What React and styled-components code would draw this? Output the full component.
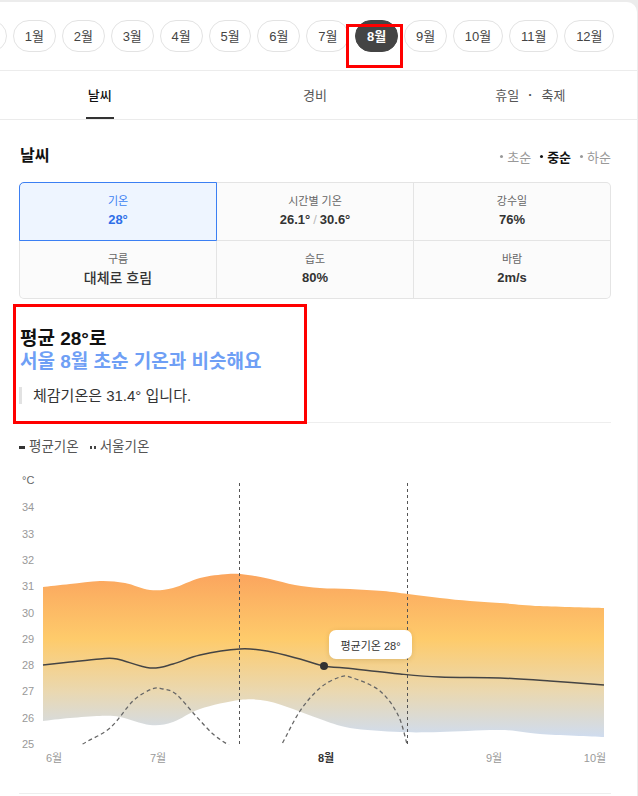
import React from 'react';
import styled, { createGlobalStyle } from 'styled-components';

const GlobalStyle = createGlobalStyle`
  html, body {
    margin: 0;
    padding: 0;
    background: #ececec;
    font-family: "Liberation Sans", "Noto Sans CJK KR", sans-serif;
    color: #333;
  }
  * { box-sizing: border-box; }
`;

const Page = styled.div`
  position: relative;
  width: 638px;
  height: 796px;
  overflow: hidden;
`;

const Card = styled.div`
  margin-top: 2px;
  width: 637px;
  height: 794px;
  background: #fff;
  border-top-right-radius: 10px;
  overflow: hidden;
`;

const MonthBar = styled.div`
  height: 69px;
  padding-top: 18px;
  border-bottom: 1px solid #ececec;
  overflow: hidden;
`;

const MonthRow = styled.div`
  display: flex;
  gap: 6px;
  margin-left: -36px;
`;

const Pill = styled.div`
  flex: none;
  height: 32px;
  ${p => p.$ghost && 'width: 43px;'}
  padding: 0 10.85px;
  display: flex;
  align-items: center;
  justify-content: center;
  border-radius: 16px;
  border: 1px solid ${p => (p.$active ? '#444' : '#e3e3e3')};
  background: ${p => (p.$active ? '#444' : '#fff')};
  color: ${p => (p.$active ? '#fff' : '#444')};
  font-size: 13px;
  font-weight: ${p => (p.$active ? 700 : 400)};
  line-height: 1;
`;

const Tabs = styled.div`
  display: grid;
  grid-template-columns: repeat(3, 1fr);
  width: 646px;
  margin-left: -8px;
  height: 49px;
  border-bottom: 1px solid #ebebeb;
`;

const Tab = styled.div`
  display: flex;
  justify-content: center;
`;

const TabLabel = styled.div`
  height: 100%;
  display: flex;
  align-items: center;
  padding: 0 2px;
  font-size: 13px;
  color: ${p => (p.$active ? '#111' : '#555')};
  font-weight: ${p => (p.$active ? 500 : 400)};
  border-bottom: 2px solid ${p => (p.$active ? '#333' : 'transparent')};
`;

const Dot = styled.span`
  margin: 0 9px;
  font-weight: 700;
`;

const Content = styled.div`
  padding: 0 26px 0 19px;
`;

const SectionHead = styled.div`
  display: flex;
  justify-content: space-between;
  align-items: center;
  margin-top: 26px;
  height: 20px;
`;

const Title = styled.h2`
  margin: 0 0 0 1px;
  font-size: 16px;
  font-weight: 700;
  color: #111;
  line-height: 20px;
`;

const Periods = styled.div`
  display: flex;
  gap: 9px;
`;

const Period = styled.span`
  display: flex;
  align-items: center;
  gap: 4px;
  font-size: 13px;
  color: ${p => (p.$active ? '#111' : '#999')};
  font-weight: ${p => (p.$active ? 700 : 400)};
  &::before {
    content: '';
    width: 3px;
    height: 3px;
    border-radius: 50%;
    background: ${p => (p.$active ? '#111' : '#999')};
  }
`;

const Table = styled.div`
  margin-top: 16px;
  display: grid;
  grid-template-columns: repeat(3, 1fr);
  grid-auto-rows: 57px;
  gap: 1px;
  padding: 1px;
  background: #e4e4e4;
  border-radius: 5px;
`;

const Cell = styled.div`
  display: flex;
  flex-direction: column;
  align-items: center;
  justify-content: center;
  gap: 3px;
  background: ${p => (p.$active ? '#eef5ff' : '#fbfbfb')};
  ${p =>
    p.$active &&
    `
    margin: -1px;
    border: 1px solid #3b7ff3;
    border-top-left-radius: 5px;
    position: relative;
    z-index: 1;
  `}
  ${p => p.$corner === 'tr' && 'border-top-right-radius: 4px;'}
  ${p => p.$corner === 'bl' && 'border-bottom-left-radius: 4px;'}
  ${p => p.$corner === 'br' && 'border-bottom-right-radius: 4px;'}
`;

const CellLabel = styled.div`
  font-size: 11px;
  line-height: 14px;
  color: ${p => (p.$active ? '#3b7ff3' : '#666')};
`;

const CellValue = styled.div`
  font-size: ${p => (p.$plain ? '14px' : '13px')};
  font-weight: ${p => (p.$plain ? 500 : 700)};
  line-height: 18px;
  color: ${p => (p.$active ? '#2f6fe8' : '#333')};
`;

const Slash = styled.span`
  color: #bbb;
  font-weight: 400;
  margin: 0 3px;
`;

const Summary = styled.div`
  margin-top: 28px;
  padding-left: 1px;
`;

const Headline = styled.div`
  font-size: 19px;
  font-weight: 700;
  line-height: 23px;
  color: ${p => (p.$accent ? '#6f9ff5' : '#111')};
`;

const Quote = styled.div`
  margin-top: 14px;
  margin-left: -1px;
  padding-left: 11px;
  border-left: 3px solid #e2e2e2;
  font-size: 15px;
  line-height: 17px;
  color: #333;
`;

const Divider = styled.hr`
  margin: ${p => p.$top}px 0 0;
  border: 0;
  border-top: 1px solid #eeeeee;
`;

const Legend = styled.div`
  display: flex;
  gap: 11px;
  margin-top: 16px;
  font-size: 13.5px;
  line-height: 16px;
  color: #555;
`;

const LegendItem = styled.span`
  display: flex;
  align-items: center;
  gap: 4px;
`;

const Swatch = styled.span`
  display: inline-block;
  width: 6px;
  height: 3px;
  background: ${p =>
    p.$dashed
      ? 'repeating-linear-gradient(90deg, #444 0 2px, transparent 2px 4px)'
      : '#333'};
`;

const ChartWrap = styled.div`
  position: relative;
  margin-top: 16px;
  width: 592px;
  height: 300px;
`;

const Tooltip = styled.div`
  position: absolute;
  left: 310px;
  top: 159px;
  width: 83px;
  height: 29px;
  display: flex;
  align-items: center;
  justify-content: center;
  background: #fff;
  border-radius: 7px;
  box-shadow: 0 1px 5px rgba(120, 90, 30, 0.2);
  font-size: 11px;
  color: #333;
`;

const Annotation = styled.div`
  position: absolute;
  left: ${p => p.$x}px;
  top: ${p => p.$y}px;
  width: ${p => p.$w}px;
  height: ${p => p.$h}px;
  border: 3px solid #ff0000;
  pointer-events: none;
`;

const smooth = pts => {
  let d = `M${pts[0][0]},${pts[0][1]}`;
  for (let i = 0; i < pts.length - 1; i++) {
    const p0 = pts[i - 1] || pts[i];
    const p1 = pts[i];
    const p2 = pts[i + 1];
    const p3 = pts[i + 2] || p2;
    const c1x = p1[0] + (p2[0] - p0[0]) / 6;
    const c1y = p1[1] + (p2[1] - p0[1]) / 6;
    const c2x = p2[0] - (p3[0] - p1[0]) / 6;
    const c2y = p2[1] - (p3[1] - p1[1]) / 6;
    d += ` C${c1x.toFixed(1)},${c1y.toFixed(1)} ${c2x.toFixed(1)},${c2y.toFixed(1)} ${p2[0]},${p2[1]}`;
  }
  return d;
};

const bandTop = [
  [43, 586], [70, 583], [100, 580], [125, 582], [150, 589], [173, 587],
  [200, 577], [228, 573], [248, 574], [270, 578], [295, 584], [320, 587],
  [350, 588], [383, 590], [408, 593], [440, 597], [470, 600], [500, 602],
  [540, 605], [604, 607],
];
const bandBottom = [
  [43, 720], [70, 717], [100, 715], [120, 716], [150, 724], [173, 721],
  [200, 708], [240, 699], [267, 700], [293, 708], [320, 718], [350, 727],
  [400, 731], [440, 731], [500, 729], [540, 733], [604, 736],
];
const meanLine = [
  [43, 664], [70, 661], [100, 658], [117, 658], [150, 667], [173, 663],
  [200, 654], [240, 648], [267, 650], [300, 658], [324, 665], [345, 667],
  [400, 673], [440, 676], [500, 677], [550, 680], [604, 684],
];
const seoulA = [
  [60, 760], [83, 743], [110, 727], [133, 700], [152, 688], [163, 688],
  [176, 693], [195, 714], [213, 733], [230, 745], [245, 755],
];
const seoulB = [
  [272, 760], [282, 743], [300, 710], [320, 687], [340, 676], [353, 677],
  [380, 690], [398, 714], [407, 743], [412, 760],
];

const bandPath = () => {
  const bottom = [...bandBottom].reverse();
  return `${smooth(bandTop)} L${bottom[0][0]},${bottom[0][1]} ${smooth(bottom).slice(1).replace(/^[^C]*/, '')} Z`;
};

const months = ['', '1월', '2월', '3월', '4월', '5월', '6월', '7월', '8월', '9월', '10월', '11월', '12월'];
const ticks = [34, 33, 32, 31, 30, 29, 28, 27, 26, 25];
const xLabels = [
  { x: 54, t: '6월' },
  { x: 158, t: '7월' },
  { x: 326, t: '8월', bold: true },
  { x: 494, t: '9월' },
  { x: 595, t: '10월' },
];

const cells = [
  { label: '기온', value: '28°', active: true },
  { label: '시간별 기온', value: ['26.1°', '30.6°'], corner: 'none' },
  { label: '강수일', value: '76%', corner: 'tr' },
  { label: '구름', value: '대체로 흐림', plain: true, corner: 'bl' },
  { label: '습도', value: '80%' },
  { label: '바람', value: '2m/s', corner: 'br' },
];

const Chart = () => (
  <ChartWrap>
    <svg width="592" height="300" viewBox="19 470 592 300">
      <defs>
        <linearGradient id="band" gradientUnits="userSpaceOnUse" x1="0" y1="573" x2="0" y2="736">
          <stop offset="0" stopColor="#fba55e" />
          <stop offset="0.4" stopColor="#fecb6b" />
          <stop offset="0.72" stopColor="#ead8b0" />
          <stop offset="1" stopColor="#cfdcef" />
        </linearGradient>
        <clipPath id="plot">
          <rect x="19" y="470" width="592" height="273.5" />
        </clipPath>
      </defs>
      <text x="22" y="483" fontSize="11" fill="#666">°C</text>
      {ticks.map(t => (
        <text key={t} x="22" y={743 - (t - 25) * 26.3 + 4} fontSize="11" fill="#999">
          {t}
        </text>
      ))}
      <path d={bandPath()} fill="url(#band)" />
      <g clipPath="url(#plot)" fill="none" stroke="#666" strokeWidth="1.3" strokeDasharray="4 3">
        <path d={smooth(seoulA)} />
        <path d={smooth(seoulB)} />
      </g>
      <g stroke="#555" strokeWidth="1" strokeDasharray="3 3">
        <line x1="239.5" y1="482" x2="239.5" y2="744" />
        <line x1="407.5" y1="482" x2="407.5" y2="744" />
      </g>
      <path d={smooth(meanLine)} fill="none" stroke="#444" strokeWidth="1.5" />
      <circle cx="324" cy="665" r="4" fill="#333" />
      {xLabels.map(l => (
        <text
          key={l.t}
          x={l.x}
          y="761"
          fontSize="11"
          textAnchor="middle"
          fill={l.bold ? '#333' : '#999'}
          fontWeight={l.bold ? 700 : 400}
        >
          {l.t}
        </text>
      ))}
    </svg>
    <Tooltip>평균기온 28°</Tooltip>
  </ChartWrap>
);

export default function App() {
  return (
    <Page>
      <GlobalStyle />
      <Card>
        <MonthBar>
          <MonthRow>
            {months.map((m, i) => (
              <Pill key={i} $ghost={!m} $active={m === '8월'}>
                {m}
              </Pill>
            ))}
          </MonthRow>
        </MonthBar>
        <Tabs>
          <Tab>
            <TabLabel $active>날씨</TabLabel>
          </Tab>
          <Tab>
            <TabLabel>경비</TabLabel>
          </Tab>
          <Tab>
            <TabLabel>
              휴일<Dot>·</Dot>축제
            </TabLabel>
          </Tab>
        </Tabs>
        <Content>
          <SectionHead>
            <Title>날씨</Title>
            <Periods>
              <Period>초순</Period>
              <Period $active>중순</Period>
              <Period>하순</Period>
            </Periods>
          </SectionHead>
          <Table>
            {cells.map(c => (
              <Cell key={c.label} $active={c.active} $corner={c.corner}>
                <CellLabel $active={c.active}>{c.label}</CellLabel>
                <CellValue $active={c.active} $plain={c.plain}>
                  {Array.isArray(c.value) ? (
                    <>
                      {c.value[0]}
                      <Slash>/</Slash>
                      {c.value[1]}
                    </>
                  ) : (
                    c.value
                  )}
                </CellValue>
              </Cell>
            ))}
          </Table>
          <Summary>
            <Headline>평균 28°로</Headline>
            <Headline $accent>서울 8월 초순 기온과 비슷해요</Headline>
            <Quote>체감기온은 31.4° 입니다.</Quote>
          </Summary>
          <Divider $top={18} />
          <Legend>
            <LegendItem>
              <Swatch />
              평균기온
            </LegendItem>
            <LegendItem>
              <Swatch $dashed />
              서울기온
            </LegendItem>
          </Legend>
          <Chart />
          <Divider $top={22} />
        </Content>
      </Card>
      <Annotation $x={346} $y={24} $w={57} $h={44} />
      <Annotation $x={13} $y={304} $w={294} $h={120} />
    </Page>
  );
}
